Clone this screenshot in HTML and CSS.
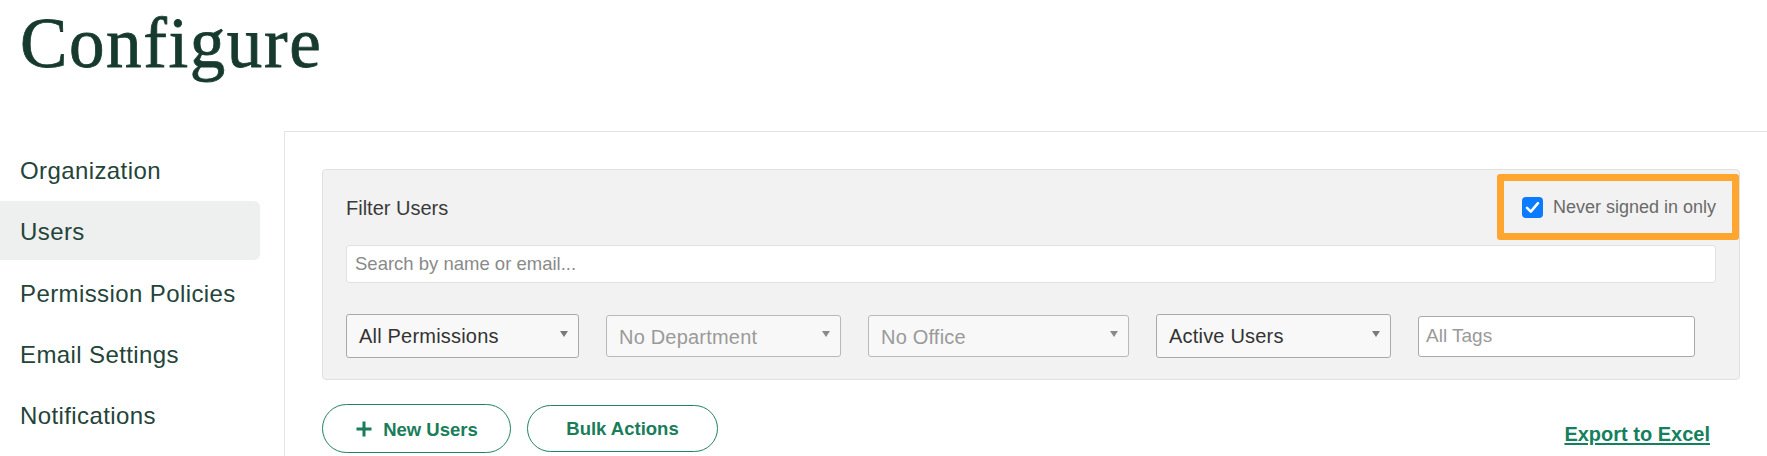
FILE: index.html
```html
<!DOCTYPE html>
<html lang="en">
<head>
<meta charset="utf-8">
<title>Configure</title>
<link rel="stylesheet" href="styles.css">
</head>
<body>
<div class="page">
  <h1 class="title">Configure</h1>
  <div class="layout">
    <nav class="sidebar">
      <a class="nav-item">Organization</a>
      <a class="nav-item active">Users</a>
      <a class="nav-item">Permission Policies</a>
      <a class="nav-item">Email Settings</a>
      <a class="nav-item">Notifications</a>
    </nav>
    <main class="panel">
      <section class="filter">
        <div class="filter-head">
          <span class="filter-title">Filter Users</span>
          <label class="highlight">
            <svg class="checkbox" width="21" height="21" viewBox="0 0 21 21" aria-hidden="true">
              <rect x="0" y="0" width="21" height="21" rx="4" fill="#0b7bff"/>
              <path d="M5 10.8 L8.8 14.6 L16 6.2" fill="none" stroke="#ffffff" stroke-width="2.6" stroke-linecap="round" stroke-linejoin="round"/>
            </svg>
            <span class="cb-label">Never signed in only</span>
          </label>
        </div>
        <div class="search">Search by name or email...</div>
        <div class="selects">
          <div class="select s-perm">All Permissions<span class="caret"></span></div>
          <div class="select disabled s-dept">No Department<span class="caret"></span></div>
          <div class="select disabled s-office">No Office<span class="caret"></span></div>
          <div class="select s-active">Active Users<span class="caret"></span></div>
          <div class="tags">All Tags</div>
        </div>
      </section>
      <div class="actions">
        <button class="btn btn-new">
          <svg class="plus" width="18" height="18" viewBox="0 0 18 18" aria-hidden="true">
            <path d="M9 1.5 V16.5 M1.5 9 H16.5" stroke="#1a7d5a" stroke-width="3" fill="none"/>
          </svg>
          <span>New Users</span>
        </button>
        <button class="btn btn-bulk">Bulk Actions</button>
        <a class="export">Export to Excel</a>
      </div>
    </main>
  </div>
</div>
</body>
</html>
```

FILE: styles.css
```css
html, body {
  margin: 0;
  padding: 0;
  background: #ffffff;
  overflow: hidden;
}

body {
  font-family: "Liberation Sans", Arial, sans-serif;
  width: 1767px;
  height: 456px;
}

.page {
  display: flex;
  flex-direction: column;
  height: 456px;
}

.title {
  margin: 0;
  padding: 8px 0 0 20px;
  font-family: "Liberation Serif", "Times New Roman", serif;
  font-weight: normal;
  font-size: 71px;
  line-height: 71px;
  letter-spacing: 1.6px;
  font-variant-ligatures: none;
  color: #173a2f;
  -webkit-text-stroke: 0.8px #173a2f;
}

.layout {
  margin-top: 52px;
  display: flex;
  flex: 1;
}

.sidebar {
  width: 284px;
  box-sizing: border-box;
  padding: 9px 24px 0 0;
  display: flex;
  flex-direction: column;
  gap: 2.25px;
}

.nav-item {
  display: block;
  height: 59px;
  line-height: 57px;
  padding: 2px 0 0 20px;
  box-sizing: border-box;
  font-size: 24px;
  letter-spacing: 0.4px;
  color: #24443a;
  border-radius: 0 6px 6px 0;
}

.nav-item.active {
  background: #eef0ef;
}

.panel {
  flex: 1;
  border-top: 1px solid #e4e4e4;
  border-left: 1px solid #e4e4e4;
  padding: 37px 27px 0 37px;
}

.filter {
  background: #f2f2f2;
  border: 1px solid #e1e1e1;
  border-radius: 4px;
  padding: 4px 23px 21px 23px;
}

.filter-head {
  display: flex;
  align-items: center;
  justify-content: space-between;
}

.filter-title {
  font-size: 20px;
  color: #3a3a3a;
  padding-top: 3px;
}

.highlight {
  display: flex;
  align-items: center;
  gap: 10px;
  height: 66px;
  box-sizing: border-box;
  border: 7px solid #ffa630;
  border-radius: 3px;
  padding: 1px 16px 0 18px;
  margin-right: -23px;
}

.checkbox {
  display: block;
  flex: none;
}

.cb-label {
  font-size: 18px;
  color: #6a6a6a;
}

.search {
  margin-top: 5px;
  height: 38px;
  box-sizing: border-box;
  background: #ffffff;
  border: 1px solid #e0e0e0;
  border-radius: 3px;
  padding-left: 8px;
  font-size: 18.5px;
  line-height: 36px;
  color: #8a8a8a;
}

.selects {
  margin-top: 31px;
  display: flex;
  align-items: center;
  gap: 27px;
}

.select {
  position: relative;
  height: 44px;
  box-sizing: border-box;
  background: #f8f8f8;
  border: 1px solid #a9a9a9;
  border-radius: 3px;
  padding-left: 12px;
  font-size: 20px;
  letter-spacing: 0.2px;
  line-height: 42px;
  color: #333333;
}

.select.disabled {
  height: 42px;
  line-height: 42px;
  color: #9a9a9a;
  border-color: #b9b9b9;
}

.s-perm { width: 233px; }
.s-dept { width: 235px; }
.s-office { width: 261px; }
.s-active { width: 235px; }

.caret {
  position: absolute;
  right: 10px;
  top: 16px;
  width: 0;
  height: 0;
  border-left: 4.5px solid transparent;
  border-right: 4.5px solid transparent;
  border-top: 6px solid #7a7a7a;
}

.select.disabled .caret {
  top: 15px;
  border-top-color: #8a8a8a;
}

.tags {
  width: 277px;
  height: 41px;
  box-sizing: border-box;
  background: #ffffff;
  border: 1px solid #a9a9a9;
  border-radius: 3px;
  padding-left: 7px;
  font-size: 19px;
  line-height: 37px;
  color: #9a9a9a;
}

.actions {
  margin-top: 24px;
  display: flex;
  align-items: flex-start;
  gap: 16px;
}

.btn {
  display: flex;
  align-items: center;
  justify-content: center;
  box-sizing: border-box;
  background: #ffffff;
  border: 1px solid #238260;
  border-radius: 30px;
  font-family: "Liberation Sans", Arial, sans-serif;
  font-weight: bold;
  font-size: 18.5px;
  color: #1a7d5a;
  margin: 0;
  cursor: pointer;
}

.btn-new {
  width: 189px;
  height: 49px;
  gap: 10px;
  padding: 2px 0 0 0;
}

.btn-new .plus {
  display: block;
  margin-top: -2px;
}

.btn-bulk {
  width: 191px;
  height: 47px;
  margin-top: 1px;
  padding: 1px 0 0 0;
}

.export {
  margin-left: auto;
  margin-right: 30px;
  margin-top: 18px;
  font-weight: bold;
  font-size: 20px;
  line-height: 24px;
  color: #15805e;
  text-decoration: underline;
  text-decoration-thickness: 2px;
  text-underline-offset: 2px;
  cursor: pointer;
}
```
